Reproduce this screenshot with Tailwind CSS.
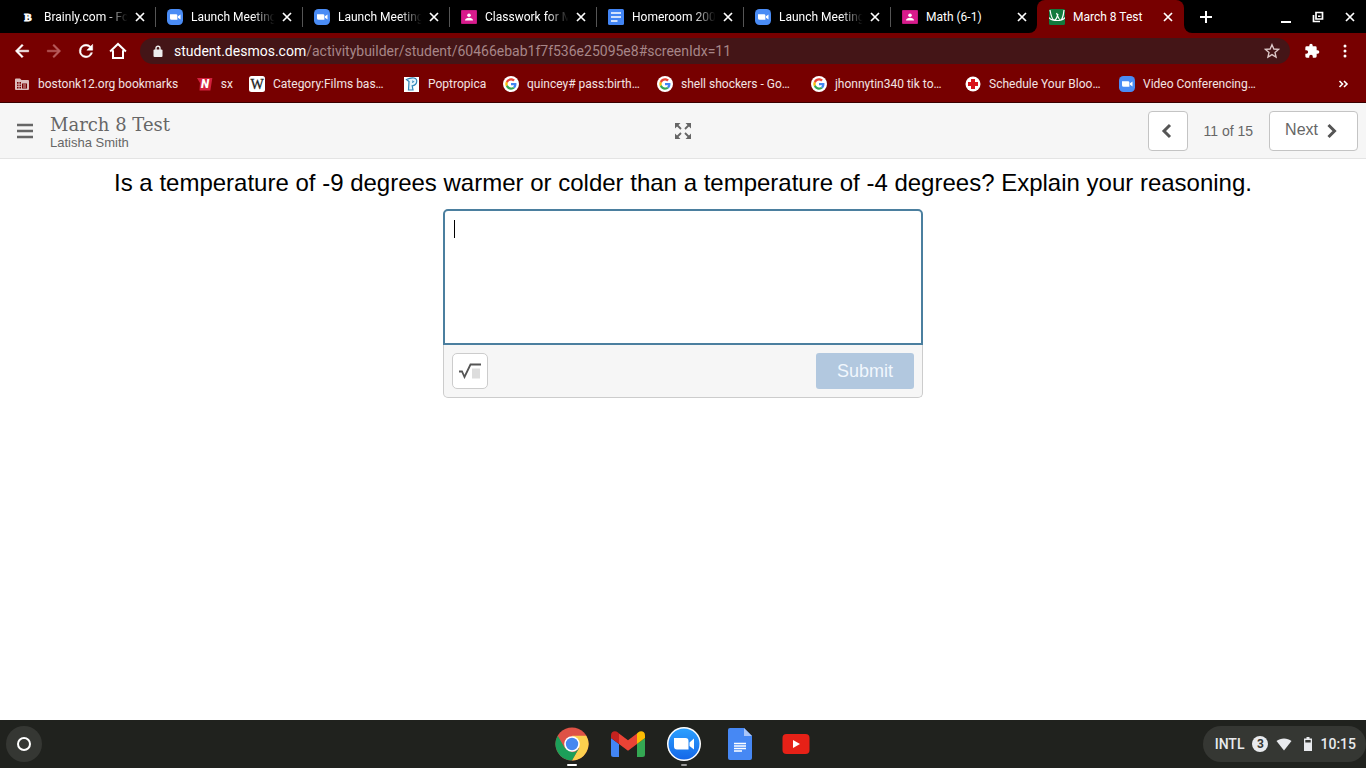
<!DOCTYPE html>
<html lang="en">
<head>
    <meta charset="UTF-8">
    <meta name="viewport" content="width=device-width, initial-scale=1.0">
    <title>March 8 Test</title>
    <script src="https://cdn.jsdelivr.net/npm/@tailwindcss/browser@4"></script>
</head>
<body class="flex min-h-screen flex-col bg-white font-['Roboto',sans-serif]">

    <!-- Shared icons -->
    <svg class="hidden" xmlns="http://www.w3.org/2000/svg">
        <symbol id="close" viewBox="0 0 16 16">
            <path d="M4 4l8 8M12 4l-8 8" stroke="currentColor" stroke-width="1.700" fill="none"/>
        </symbol>
        <symbol id="zoom" viewBox="0 0 16 16">
            <rect width="16" height="16" rx="4.500" fill="#4a8cf5"/>
            <path d="M3 5.200h6a1.400 1.400 0 0 1 1.400 1.400v4.200H4.600A1.600 1.600 0 0 1 3 9.200zM11 7.200l2.500-1.800v5.200L11 8.800z" fill="#fff"/>
        </symbol>
        <symbol id="classroom" viewBox="0 0 16 16">
            <rect y="1" width="16" height="14" rx="1" fill="#c2187f"/>
            <rect x="1" y="2" width="14" height="12" fill="#d81b8c"/>
            <circle cx="8" cy="6.200" r="1.800" fill="#fff"/>
            <path d="M4 11.500c0-1.800 2-2.700 4-2.700s4 .9 4 2.700z" fill="#fff"/>
        </symbol>
        <symbol id="google" viewBox="0 0 16 16">
            <circle cx="8" cy="8" r="8" fill="#fff"/>
            <g transform="translate(2.300 2.300) scale(.2375)">
                <path fill="#EA4335" d="M24 9.500c3.540 0 6.710 1.220 9.210 3.600l6.850-6.850C35.900 2.380 30.470 0 24 0 14.620 0 6.510 5.380 2.560 13.220l7.980 6.190C12.430 13.720 17.740 9.500 24 9.500z"/>
                <path fill="#4285F4" d="M46.980 24.550c0-1.570-.15-3.090-.38-4.550H24v9.020h12.940c-.58 2.960-2.260 5.480-4.780 7.180l7.730 6c4.510-4.180 7.090-10.360 7.090-17.650z"/>
                <path fill="#FBBC05" d="M10.530 28.590c-.48-1.450-.76-2.990-.76-4.590s.27-3.140.76-4.590l-7.980-6.190C.92 16.460 0 20.120 0 24c0 3.880.92 7.540 2.560 10.780l7.970-6.190z"/>
                <path fill="#34A853" d="M24 48c6.480 0 11.930-2.130 15.890-5.810l-7.730-6c-2.150 1.450-4.920 2.300-8.160 2.300-6.260 0-11.570-4.220-13.470-9.910l-7.980 6.190C6.510 42.620 14.620 48 24 48z"/>
            </g>
        </symbol>
        <symbol id="docs" viewBox="0 0 16 16">
            <rect width="16" height="16" rx="1.500" fill="#4285f4"/>
            <path d="M3 4h10M3 8h10M3 12h6.500" stroke="#fff" stroke-width="1.700"/>
        </symbol>
    </svg>

    <!-- Tab strip -->
    <header class="bg-[#770000] text-white">
        <div class="flex h-[33px] bg-[#770000]">
            <div class="flex flex-1 items-center rounded-br-lg bg-black pl-2 text-xs">
                <div class="flex w-[147px] items-center pl-3 pr-[7px]">
                    <svg class="mr-2 size-4 shrink-0" viewBox="0 0 16 16"><text x="8" y="12" text-anchor="middle" font-family="Liberation Serif, serif" font-weight="700" font-size="11" fill="#fff" stroke="#fff" stroke-width=".8">B</text></svg>
                    <span class="flex-1 whitespace-nowrap mask-r-from-70% mask-r-to-95%">Brainly.com - Fo</span>
                    <button class="size-4 shrink-0" aria-label="Close tab"><svg class="size-4"><use href="#close"/></svg></button>
                </div>
                <div class="h-5 w-px bg-[#555]"></div>
                <div class="flex w-[146px] items-center pl-[11px] pr-[7px]">
                    <svg class="mr-2 size-4 shrink-0"><use href="#zoom"/></svg>
                    <span class="flex-1 whitespace-nowrap mask-r-from-70% mask-r-to-95%">Launch Meeting</span>
                    <button class="size-4 shrink-0" aria-label="Close tab"><svg class="size-4"><use href="#close"/></svg></button>
                </div>
                <div class="h-5 w-px bg-[#555]"></div>
                <div class="flex w-[146px] items-center pl-[11px] pr-[7px]">
                    <svg class="mr-2 size-4 shrink-0"><use href="#zoom"/></svg>
                    <span class="flex-1 whitespace-nowrap mask-r-from-70% mask-r-to-95%">Launch Meeting</span>
                    <button class="size-4 shrink-0" aria-label="Close tab"><svg class="size-4"><use href="#close"/></svg></button>
                </div>
                <div class="h-5 w-px bg-[#555]"></div>
                <div class="flex w-[146px] items-center pl-[11px] pr-[7px]">
                    <svg class="mr-2 size-4 shrink-0"><use href="#classroom"/></svg>
                    <span class="flex-1 whitespace-nowrap mask-r-from-70% mask-r-to-95%">Classwork for M</span>
                    <button class="size-4 shrink-0" aria-label="Close tab"><svg class="size-4"><use href="#close"/></svg></button>
                </div>
                <div class="h-5 w-px bg-[#555]"></div>
                <div class="flex w-[146px] items-center pl-[11px] pr-[7px]">
                    <svg class="mr-2 size-4 shrink-0"><use href="#docs"/></svg>
                    <span class="flex-1 whitespace-nowrap mask-r-from-70% mask-r-to-95%">Homeroom 200</span>
                    <button class="size-4 shrink-0" aria-label="Close tab"><svg class="size-4"><use href="#close"/></svg></button>
                </div>
                <div class="h-5 w-px bg-[#555]"></div>
                <div class="flex w-[146px] items-center pl-[11px] pr-[7px]">
                    <svg class="mr-2 size-4 shrink-0"><use href="#zoom"/></svg>
                    <span class="flex-1 whitespace-nowrap mask-r-from-70% mask-r-to-95%">Launch Meeting</span>
                    <button class="size-4 shrink-0" aria-label="Close tab"><svg class="size-4"><use href="#close"/></svg></button>
                </div>
                <div class="h-5 w-px bg-[#555]"></div>
                <div class="flex w-[146px] items-center pl-[11px] pr-[7px]">
                    <svg class="mr-2 size-4 shrink-0"><use href="#classroom"/></svg>
                    <span class="flex-1 whitespace-nowrap">Math (6-1)</span>
                    <button class="size-4 shrink-0" aria-label="Close tab"><svg class="size-4"><use href="#close"/></svg></button>
                </div>
            </div>
            <div class="bg-black">
                <div class="flex h-full w-[147px] items-center rounded-t-lg bg-[#770000] pl-3 pr-2 text-xs">
                    <svg class="mr-2 size-4 shrink-0" viewBox="0 0 16 16">
                        <rect width="16" height="16" rx="1.500" fill="#127a3d"/>
                        <path d="M0 8.500c3 4 13 4 16 0M1 1c1 6 2.500 10 4.500 10S8 8 9 5M7.500 4c1.500 4 2.500 7 4 7s3-5 3.500-10" fill="none" stroke="#fff" stroke-width="1.200"/>
                    </svg>
                    <span class="flex-1 whitespace-nowrap">March 8 Test</span>
                    <button class="size-4 shrink-0" aria-label="Close tab"><svg class="size-4"><use href="#close"/></svg></button>
                </div>
            </div>
            <div class="flex w-[182px] items-center justify-between rounded-bl-lg bg-black pl-[14px] pr-2">
                <button aria-label="New tab"><svg class="size-4" viewBox="0 0 16 16"><path d="M8 2v12M2 8h12" stroke="#fff" stroke-width="2"/></svg></button>
                <div class="flex gap-4">
                    <button aria-label="Minimize"><svg class="size-4" viewBox="0 0 16 16"><path d="M3 13h10" stroke="#fff" stroke-width="2"/></svg></button>
                    <button aria-label="Restore"><svg class="size-4" viewBox="0 0 16 16"><path d="M6 3.500h6.500V10H6zM3.500 6v6.500H10" fill="none" stroke="#fff" stroke-width="1.700"/><path d="M8 6.500h2.500V8H8z" fill="#fff"/></svg></button>
                    <button aria-label="Close window"><svg class="size-4"><use href="#close"/></svg></button>
                </div>
            </div>
        </div>

        <!-- Toolbar -->
        <div class="flex h-9 items-center pl-3 pr-[13px]">
            <div class="flex gap-3">
                <button aria-label="Back"><svg class="size-5" viewBox="0 0 24 24" fill="#fff"><path d="M20 11H7.830l5.590-5.590L12 4l-8 8 8 8 1.410-1.410L7.830 13H20z" stroke="#fff" stroke-width=".6"/></svg></button>
                <button aria-label="Forward"><svg class="size-5" viewBox="0 0 24 24" fill="#b85c5c"><path d="M4 11h12.170l-5.590-5.590L12 4l8 8-8 8-1.410-1.410L16.170 13H4z" stroke="#b85c5c" stroke-width=".6"/></svg></button>
                <button aria-label="Reload"><svg class="size-5" viewBox="0 0 24 24" fill="#fff"><path d="M17.650 6.350A7.960 7.960 0 0 0 12 4a8 8 0 1 0 7.730 10h-2.080A6 6 0 1 1 12 6c1.660 0 3.140.69 4.220 1.780L13 11h7V4z" stroke="#fff" stroke-width=".6"/></svg></button>
                <button aria-label="Home"><svg class="size-5" viewBox="0 0 24 24" fill="none" stroke="#fff" stroke-width="2.400"><path d="M2.500 12.500L12 3.500l9.500 9M6 11v9.500h12V11"/></svg></button>
            </div>
            <div class="ml-3 flex h-[26px] flex-1 items-center rounded-full bg-[#441517] pl-3 pr-[10px] text-sm">
                <svg class="mr-[10px] size-3" viewBox="0 0 12 12"><rect x="1.500" y="4.500" width="9" height="7.500" rx="1" fill="#eee"/><path d="M4 5V3.200a2 2 0 0 1 4 0V5" fill="none" stroke="#eee" stroke-width="1.400"/></svg>
                <a href="#" class="flex-1 whitespace-nowrap text-[#a78688]"><span class="text-white">student.desmos.com</span>/activitybuilder/student/60466ebab1f7f536e25095e8#screenIdx=11</a>
                <button aria-label="Bookmark this tab"><svg class="size-4" viewBox="0 0 24 24" fill="none" stroke="#ddc9c9" stroke-width="2"><path d="M12 2.500l2.800 6.500 7 .6-5.300 4.600 1.600 6.900L12 17.400l-6.100 3.700 1.600-6.900L2.200 9.600l7-.6z"/></svg></button>
            </div>
            <button class="ml-[14px]" aria-label="Extensions"><svg class="size-4" viewBox="0 0 24 24" fill="#fff"><path d="M20.500 11H19V7a2 2 0 0 0-2-2h-4V3.500a2.500 2.500 0 0 0-5 0V5H4a2 2 0 0 0-2 2v3.800h1.500a2.700 2.700 0 0 1 0 5.400H2V20a2 2 0 0 0 2 2h3.800v-1.500a2.700 2.700 0 0 1 5.400 0V22H17a2 2 0 0 0 2-2v-4h1.500a2.500 2.500 0 0 0 0-5z"/></svg></button>
            <button class="ml-[17px]" aria-label="Menu"><svg class="size-4" viewBox="0 0 16 16" fill="#fff"><circle cx="8" cy="3" r="1.500"/><circle cx="8" cy="8" r="1.500"/><circle cx="8" cy="13" r="1.500"/></svg></button>
        </div>

        <!-- Bookmarks bar -->
        <nav class="flex h-[34px] items-center gap-4 border-b border-[#3a0000] pb-1 pl-[14px] pr-[15px] text-xs whitespace-nowrap text-[#f3e3e3]">
            <a href="#" class="flex w-[167px] items-center gap-2">
                <svg class="size-4" viewBox="0 0 16 16"><path d="M2 2.500h4L7.500 4H14a1 1 0 0 1 1 1v8a1 1 0 0 1-1 1H2a1 1 0 0 1-1-1V3.500a1 1 0 0 1 1-1z" fill="#dcbcbc"/><path d="M3 6h4v6.500H3zM8 7.500h5v5H8z" fill="#770000"/><path d="M3 8.200h4M3 10.400h4M5 6v7M9 9h3M9 11h3" stroke="#dcbcbc" stroke-width=".9"/></svg>
                bostonk12.org bookmarks
            </a>
            <a href="#" class="flex w-9 items-center gap-2">
                <svg class="size-4" viewBox="0 0 16 16"><path d="M0 2h15.500l-2 12.500H2.500L3 7z" fill="#d3203c"/><text x="8" y="12.500" text-anchor="middle" font-family="Roboto, sans-serif" font-style="italic" font-weight="900" font-size="12" fill="#fff">N</text></svg>
                sx
            </a>
            <a href="#" class="flex w-[139px] items-center gap-2">
                <svg class="size-4" viewBox="0 0 16 16"><rect width="16" height="16" rx="2.500" fill="#fff"/><text x="8" y="13" text-anchor="middle" font-family="Liberation Serif, serif" font-size="14" fill="#222" stroke="#222" stroke-width=".3">W</text></svg>
                Category:Films bas…
            </a>
            <a href="#" class="flex w-[83px] items-center gap-2">
                <svg class="size-4" viewBox="0 0 16 16"><rect y="1" width="15" height="15" fill="#fff"/><path d="M2.500 3.500c3-1.500 5-2 7.500-1.500 4 .8 3.800 7-1.800 7.800L9 14H4.500L5 5.500z" fill="#e4f4fc" stroke="#2f86b8" stroke-width="1.200"/><path d="M8 5l1.800.5L8.300 7" fill="none" stroke="#2f86b8"/></svg>
                Poptropica
            </a>
            <a href="#" class="flex w-[138px] items-center gap-2"><svg class="size-4"><use href="#google"/></svg>quincey# pass:birth…</a>
            <a href="#" class="flex w-[138px] items-center gap-2"><svg class="size-4"><use href="#google"/></svg>shell shockers - Go…</a>
            <a href="#" class="flex w-[138px] items-center gap-2"><svg class="size-4"><use href="#google"/></svg>jhonnytin340 tik to…</a>
            <a href="#" class="flex w-[138px] items-center gap-2">
                <svg class="size-4" viewBox="0 0 16 16"><circle cx="8" cy="8" r="7.500" fill="#fff"/><path d="M8 3v10M3 8h10" stroke="#d8131b" stroke-width="4"/></svg>
                Schedule Your Bloo…
            </a>
            <a href="#" class="flex w-[138px] items-center gap-2"><svg class="size-4"><use href="#zoom"/></svg>Video Conferencing…</a>
            <button class="ml-auto" aria-label="More bookmarks"><svg class="size-4" viewBox="0 0 16 16" fill="none" stroke="#fff" stroke-width="1.600"><path d="M4.500 5l3 3-3 3M9 5l3 3-3 3"/></svg></button>
        </nav>
    </header>

    <!-- Activity header -->
    <div class="grid h-14 grid-cols-[1fr_auto_1fr] items-center border-b border-[#e4e4e4] bg-[#f6f6f6] px-2 font-['Liberation_Sans',sans-serif] text-[#666]">
        <div class="flex items-center gap-4 pl-2">
            <button aria-label="Open menu"><svg class="size-[18px]" viewBox="0 0 18 18"><path d="M1 3h16M1 9h16M1 15h16" stroke="#666" stroke-width="2.400"/></svg></button>
            <div class="pt-1">
                <h1 class="font-['DejaVu_Serif',serif] text-lg leading-5">March 8 Test</h1>
                <p class="text-[13px] leading-4">Latisha Smith</p>
            </div>
        </div>
        <button aria-label="Full screen">
            <svg class="size-4" viewBox="0 0 16 16" fill="#666" stroke="#666">
                <path d="M0 0h5.500L0 5.500zM16 0v5.500L10.500 0zM0 16v-5.500L5.500 16zM16 16h-5.500l5.500-5.500z" stroke="none"/>
                <path d="M1.500 1.500L6 6M14.500 1.500L10 6M1.500 14.500L6 10M14.500 14.500L10 10" stroke-width="1.800"/>
            </svg>
        </button>
        <div class="flex items-center justify-end">
            <button class="flex size-10 items-center justify-center rounded-sm border border-[#c4c4c4] bg-white" aria-label="Previous"><svg class="size-4" viewBox="0 0 16 16"><path d="M10 2L4 8l6 6" fill="none" stroke="#555" stroke-width="3"/></svg></button>
            <span class="px-4 text-sm">11 of 15</span>
            <button class="flex h-10 items-center gap-1 rounded-sm border border-[#c4c4c4] bg-white pl-[15px] pr-[19px]">
                <span class="pb-[2px]">Next</span>
                <svg class="size-4" viewBox="0 0 16 16"><path d="M6.500 2l6 6-6 6" fill="none" stroke="#555" stroke-width="3"/></svg>
            </button>
        </div>
    </div>

    <!-- Question -->
    <main class="flex flex-1 flex-col items-center px-4 pt-2 font-['Liberation_Sans',sans-serif]">
        <label for="answer" class="text-center text-2xl text-black">Is a temperature of -9 degrees warmer or colder than a temperature of -4 degrees? Explain your reasoning.</label>
        <div class="mt-[10px] w-full max-w-[480px]">
            <div class="relative">
                <textarea id="answer" class="block h-[136px] w-full resize-none rounded-t-[5px] border-2 border-[#4b7f9f] bg-white px-[9px] py-2 text-lg caret-transparent outline-none"></textarea>
                <span class="absolute left-[11px] top-[11px] h-[18px] w-px bg-black"></span>
            </div>
            <div class="flex items-center justify-between rounded-b-[5px] border border-t-0 border-[#ccc] bg-[#f6f6f6] p-2">
                <button class="flex size-9 items-center justify-center rounded-[5px] border border-[#ccc] bg-white" aria-label="Insert math">
                    <svg class="h-4 w-[22px]" viewBox="0 0 22 16"><rect x="13" y="5.500" width="8" height="10" fill="#ddd"/><path d="M0 8.500h3L5.500 14l6-12.500H22" fill="none" stroke="#555" stroke-width="1.800"/></svg>
                </button>
                <button class="h-9 rounded-[3px] bg-[#b2c8df] px-[21px] text-lg text-[#f1f7fd]">Submit</button>
            </div>
        </div>
    </main>

    <!-- Shelf -->
    <footer class="grid h-12 grid-cols-[1fr_auto_1fr] items-center bg-[#20221e]">
        <button class="ml-[6px] flex size-9 items-center justify-center rounded-full bg-[#353733]" aria-label="Launcher"><span class="size-[14px] rounded-full border-2 border-white"></span></button>
        <div class="flex gap-5 pl-[2px]">
            <button class="flex h-12 w-9 flex-col items-center justify-end" aria-label="Chrome">
                <svg class="size-[34px]" viewBox="0 0 34 34">
                    <circle cx="17" cy="17" r="16.500" fill="#de5246"/>
                    <path d="M31.290 8.750A16.500 16.500 0 0 1 17 33.500l7.140-12.400L17 8.750z" fill="#fcd04e"/>
                    <path d="M17 33.500A16.500 16.500 0 0 1 2.710 8.750L9.860 21.120 17 25.200l3.500-.8 3.640-3.300z" fill="#1c9f59"/>
                    <circle cx="17" cy="17" r="7.800" fill="#fff"/>
                    <circle cx="17" cy="17" r="6.200" fill="#4587f0"/>
                </svg>
                <span class="mt-[3px] mb-[2px] h-[2px] w-[10px] rounded-full bg-white"></span>
            </button>
            <button class="flex h-12 w-9 items-center justify-center" aria-label="Gmail">
                <svg class="h-[26px] w-[34px]" viewBox="0 0 34 26">
                    <path d="M0 7l8 6v13H2.500A2.500 2.500 0 0 1 0 23.500z" fill="#4285f4"/>
                    <path d="M34 7l-8 6v13h5.500a2.500 2.500 0 0 0 2.500-2.500z" fill="#34a853"/>
                    <path d="M26 2.500V13l8-6V4.200C34 .5 30-1 27 1.500z" fill="#fbbc04"/>
                    <path d="M8 13V2.500l9 6.700 9-6.700V13l-9 6.700z" fill="#ea4335"/>
                    <path d="M0 4.200V7l8 6V2.500L7 1.500C4-1 0 .5 0 4.200z" fill="#c5221f"/>
                </svg>
            </button>
            <button class="flex h-12 w-9 flex-col items-center justify-end" aria-label="Zoom">
                <svg class="size-[34px]" viewBox="0 0 34 34">
                    <defs><linearGradient id="blue" x2="0" y2="1"><stop stop-color="#2ba0ff"/><stop offset="1" stop-color="#1567e8"/></linearGradient></defs>
                    <circle cx="17" cy="17" r="17" fill="#fff"/>
                    <circle cx="17" cy="17" r="15.500" fill="url(#blue)"/>
                    <path d="M7 11h11.500a3 3 0 0 1 3 3v8.500H10a3 3 0 0 1-3-3zM22.500 15.500l4.500-4v11l-4.500-3.500z" fill="#fff"/>
                </svg>
                <span class="mt-[3px] mb-[2px] h-[2px] w-[6px] rounded-full bg-[#999]"></span>
            </button>
            <button class="flex h-12 w-9 items-center justify-center" aria-label="Docs">
                <svg class="h-8 w-6" viewBox="0 0 24 32">
                    <path d="M2 0h14l8 8v22a2 2 0 0 1-2 2H2a2 2 0 0 1-2-2V2a2 2 0 0 1 2-2z" fill="#4688f4"/>
                    <path d="M16 0l8 8h-8z" fill="#a9c6fa"/>
                    <path d="M6 15.500h12M6 18h12M6 20.500h12M6 23h8" stroke="#fff" stroke-width="1.300"/>
                </svg>
            </button>
            <button class="flex h-12 w-9 items-center justify-center" aria-label="YouTube">
                <svg class="h-5 w-7" viewBox="0 0 28 20"><rect x=".5" width="27" height="20" rx="4" fill="#e62117"/><path d="M11 6l7 4-7 4z" fill="#fff"/></svg>
            </button>
        </div>
        <button class="ml-auto flex h-9 items-center gap-2 rounded-full bg-[#353733] pl-3 pr-[10px] text-sm font-medium text-[#e8eaed]">
            INTL
            <span class="flex size-4 items-center justify-center rounded-full bg-[#e8eaed] text-xs font-bold text-[#353733]">3</span>
            <svg class="size-4" viewBox="0 0 16 16"><path d="M8 14.500L.5 5C4.500 1.500 11.500 1.500 15.500 5z" fill="#e8eaed"/></svg>
            <svg class="ml-1 h-[14px] w-2" viewBox="0 0 8 14"><path d="M2.500 0h3v1.500H8V14H0V1.500h2.500z" fill="#e8eaed"/><path d="M1.300 3h5.400v2.500H1.300z" fill="#353733"/></svg>
            10:15
        </button>
    </footer>
</body>
</html>
